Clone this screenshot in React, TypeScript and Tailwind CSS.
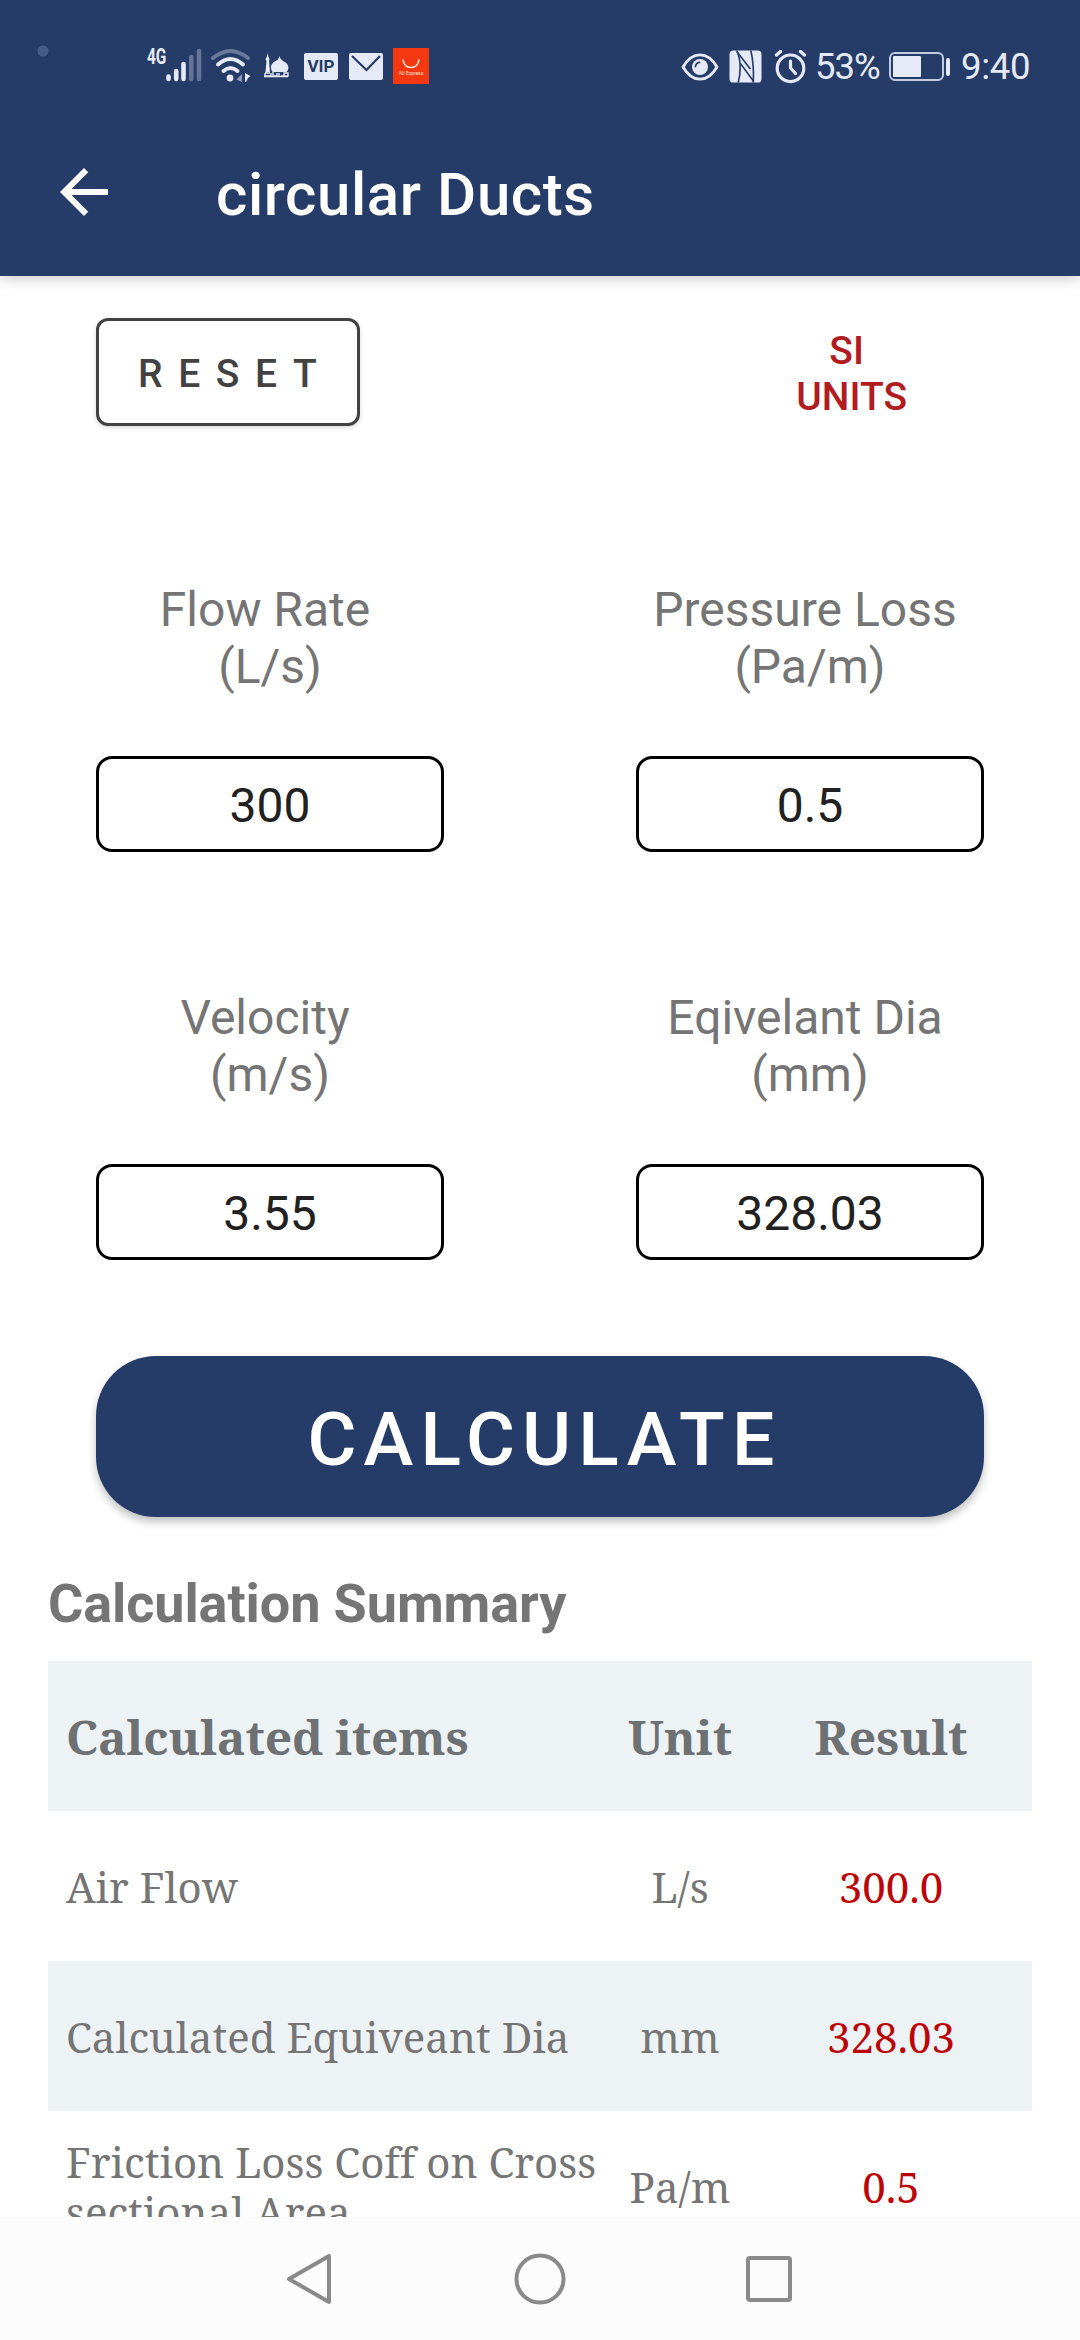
import React from "react";

const SERIF = "font-['Noto_Serif','DejaVu_Serif_Condensed','DejaVu_Serif',serif] [font-variant-ligatures:none]";

function StatusBar() {
  return (
    <div className="flex h-[120px] items-start pt-[45px] text-[#e6eaf7]">
      <svg className="ml-[32px] mt-[-4px] shrink-0" width="20" height="20" viewBox="0 0 20 20">
        <circle cx="11" cy="10" r="5.5" fill="#455a85" />
      </svg>
      <div className="ml-[95px] w-[20px] shrink-0 whitespace-nowrap text-[22px] leading-[24px] font-bold">
        <span className="inline-block origin-left scale-x-[0.7]">4G</span>
      </div>
      <svg className="-ml-[2px] shrink-0" width="38" height="40" viewBox="0 0 38 40">
        <g stroke="#e6eaf7" strokeWidth="4.6" strokeLinecap="round">
          <path d="M3.5 34V31.5M11.2 34V26M18.5 34V19" />
          <path d="M26.3 34V12M34 34V6" opacity=".32" />
        </g>
      </svg>
      <svg className="ml-[8px] shrink-0" width="42" height="40" viewBox="0 0 42 40" fill="none" stroke="#e6eaf7" strokeWidth="4" strokeLinecap="round">
        <path d="M2 13Q19.500 -1 37 13" opacity=".35" />
        <path d="M7 19.500Q19.500 8.500 32 19.500" />
        <path d="M12.500 26Q19.500 20 26.500 26" />
        <circle cx="19" cy="33" r="3.400" fill="#e6eaf7" stroke="none" />
        <path d="M31 29V37L25.500 34.500L28 32Z" fill="#8d9abc" stroke="none" />
        <path d="M34 28L39.500 31L37 33L35 37H34Z" fill="#e6eaf7" stroke="none" />
      </svg>
      <svg className="ml-[10px] shrink-0" width="28" height="40" viewBox="0 0 28 40" fill="#e6eaf7">
        <path d="M4.500 8L5.500 12L6.500 14L6 16L7 27H2.500L3.500 16L2.500 14L3.800 12Z" />
        <path d="M16.500 11Q17.500 15 22 17Q26.500 20 25 25L23.500 27H9.500Q6.500 22 9 19Q11 16.500 15 14.500Z" />
        <g fill="none" stroke="#e6eaf7" strokeWidth="1.400">
          <path d="M2 28V31H8V28M2 28H7M10 27V31H14V28M16 31V28M18 31H25V28H21V31M1 31.500H25" />
        </g>
      </svg>
      <div className="ml-[13px] mt-[8px] flex h-[27px] w-[34px] shrink-0 items-center justify-center rounded-[2px] bg-[#e6eaf7] text-[17px] font-bold text-[#263c68]">
        VIP
      </div>
      <svg className="ml-[11px] mt-[8px] shrink-0" width="34" height="27" viewBox="0 0 34 27">
        <rect width="34" height="27" rx="2" fill="#e6eaf7" />
        <path d="M3 3L17.500 17L31 3" fill="none" stroke="#263c68" strokeWidth="2.200" />
      </svg>
      <div className="ml-[10px] mt-[3px] flex h-[36px] w-[36px] shrink-0 flex-col items-center bg-[#f5380f] pt-[10px]">
        <svg width="18" height="12" viewBox="0 0 18 12" fill="none" stroke="#ffe9df" strokeWidth="1.600">
          <path d="M1 1.500Q2 9.500 9 9.500Q16 9.500 17 1.500" />
        </svg>
        <span className="-mt-[1px] text-[5px] leading-[8px] whitespace-nowrap text-[#ffe0d5]">Ali Express</span>
      </div>
      <div className="flex-1" />
      <svg className="mt-[8px] shrink-0" width="38" height="28" viewBox="0 0 38 28" fill="none" stroke="#e6eaf7">
        <path d="M2 14Q9 1.800 19 1.800Q29 1.800 36 14Q29 26.200 19 26.200Q9 26.200 2 14Z" strokeWidth="2.800" strokeLinejoin="round" />
        <circle cx="19" cy="14" r="8" fill="#e6eaf7" stroke="none" />
        <path d="M14.500 13.500Q15 9.800 18.500 9.300" stroke="#263c68" strokeWidth="1.800" strokeLinecap="round" />
      </svg>
      <svg className="ml-[10px] mt-[5px] shrink-0" width="33" height="34" viewBox="0 0 34 34" fill="none">
        <rect x="0.500" width="33" height="33" rx="4" fill="#e6eaf7" />
        <g stroke="#263c68" strokeWidth="1.700">
          <path d="M8 0Q11.500 8 11.500 17Q11.500 26 9.500 33" />
          <path d="M8 1L22 19" />
          <path d="M11.500 13L25.500 32" />
          <path d="M22.500 0Q26 15 25 33" />
        </g>
      </svg>
      <svg className="ml-[11px] mt-[5px] shrink-0" width="36" height="34" viewBox="0 0 36 34" fill="none" stroke="#e6eaf7" strokeLinecap="round">
        <circle cx="17.500" cy="18.300" r="13.300" strokeWidth="3.200" />
        <path d="M17.500 11V18L22.500 23.500" strokeWidth="3.200" />
        <path d="M3.500 5L7.500 1.500M27.500 1.500L31.500 5" strokeWidth="3.400" />
      </svg>
      <span className="ml-[6px] mt-[1px] w-[67px] shrink-0 whitespace-nowrap text-[36.500px] leading-[42px] tracking-[-1px]">53%</span>
      <div className="ml-[7px] mt-[7px] h-[29px] w-[55px] shrink-0 rounded-[6px] border-2 border-[#c0cbe4] p-[2px]">
        <div className="h-[21px] w-[28px] rounded-[1px] bg-[#e6eaf7]" />
      </div>
      <div className="ml-[2px] mt-[13px] h-[18px] w-[4px] shrink-0 rounded-[2px] bg-[#e6eaf7]" />
      <span className="ml-[11px] mr-[50px] mt-[1px] w-[69px] shrink-0 whitespace-nowrap text-[36.500px] leading-[42px] tracking-[-0.300px]">9:40</span>
    </div>
  );
}

function Field({ label, unit, value }: { label: string; unit: string; value: string }) {
  return (
    <div className="w-[348px]">
      <div className="text-center text-[48px] leading-[57px] text-[#757575]">
        <div className="-ml-[10px] whitespace-nowrap">{label}</div>
        <div className="whitespace-nowrap">{unit}</div>
      </div>
      <div className="mt-[61px] flex h-[96px] items-center justify-center rounded-[16px] border-3 border-black pt-[3px] text-[48px] text-[#212121]">
        {value}
      </div>
    </div>
  );
}

const ROWS = [
  { item: "Air Flow", unit: "L/s", result: "300.0" },
  { item: "Calculated Equiveant Dia", unit: "mm", result: "328.03" },
  { item: "Friction Loss Coff on Cross sectional Area", unit: "Pa/m", result: "0.5" },
];

export default function App() {
  return (
    <div className="flex h-[2340px] w-[1080px] flex-col overflow-hidden bg-white font-[Roboto,sans-serif]">
      <header className="z-10 h-[276px] shrink-0 bg-[#263c68] shadow-[0_4px_12px_rgba(0,0,0,0.18)]">
        <StatusBar />
        <div className="flex h-[144px] items-center">
          <svg className="ml-[48px]" width="72" height="72" viewBox="0 0 24 24" fill="#fff">
            <path d="M20 11H7.830l5.590-5.590L12 4l-8 8 8 8 1.410-1.410L7.830 13H20v-2z" />
          </svg>
          <h1 className="ml-[96px] pt-[5px] text-[60px] leading-[70px] font-medium tracking-[0.600px] text-white">circular Ducts</h1>
        </div>
      </header>

      <main className="min-h-0 flex-1 overflow-hidden">
        <div className="flex justify-between pt-[42px] pl-[96px]">
          <button className="flex h-[108px] w-[264px] items-center rounded-[12px] border-3 border-[#424242] bg-white pt-[4px] pl-[39px] text-[39px] font-medium tracking-[15.600px] text-[#424242] shadow-[0_2px_5px_rgba(0,0,0,0.15)]">
            RESET
          </button>
          <button className="mt-[4px] mr-[173px] text-center text-[39px] leading-[46px] font-medium text-[#b01c1f]">
            <span className="-ml-[10px] block">SI</span>
            UNITS
          </button>
        </div>

        <div className="flex justify-between px-[96px] pt-[155px]">
          <Field label="Flow Rate" unit="(L/s)" value="300" />
          <Field label="Pressure Loss" unit="(Pa/m)" value="0.5" />
        </div>
        <div className="flex justify-between px-[96px] pt-[137px]">
          <Field label="Velocity" unit="(m/s)" value="3.55" />
          <Field label="Eqivelant Dia" unit="(mm)" value="328.03" />
        </div>

        <button className="mt-[96px] ml-[96px] flex h-[161px] w-[888px] items-center justify-center rounded-[60px] bg-[#263c68] pt-[6px] pl-[9px] text-[75px] font-medium tracking-[7.200px] text-white shadow-[0_5px_8px_rgba(0,0,0,0.25)]">
          CALCULATE
        </button>

        <h2 className="mt-[55px] ml-[48px] text-[54px] leading-[64px] font-bold tracking-[-0.100px] text-[#757575]">Calculation Summary</h2>

        <div className={"mx-[48px] mt-[25px] " + SERIF}>
          <div className="grid h-[150px] grid-cols-[562px_140px_282px] items-center bg-[#edf2f5] text-center text-[48px] leading-[57px] font-bold text-[#6d7173]">
            <span className="pl-[18px] text-left tracking-[-0.200px]">Calculated items</span>
            <span>Unit</span>
            <span>Result</span>
          </div>
          {ROWS.map((r) => (
            <div key={r.item} className="grid h-[150px] grid-cols-[562px_140px_282px] items-center pt-[1px] text-center text-[42px] leading-[50px] text-[#757575] even:bg-white odd:bg-[#edf2f5]">
              <span className="pl-[18px] text-left">{r.item}</span>
              <span>{r.unit}</span>
              <span className="text-[#bb0509]">{r.result}</span>
            </div>
          ))}
        </div>
      </main>

      <nav className="flex h-[123px] shrink-0 items-center bg-[#fcfcfc]">
        <svg className="ml-[284px]" width="50" height="56" viewBox="0 0 50 56" fill="none" stroke="#8a8a8a" strokeWidth="4" strokeLinejoin="round">
          <path d="M45 5V51L5 28Z" />
        </svg>
        <svg className="ml-[178px]" width="56" height="56" viewBox="0 0 56 56" fill="none" stroke="#8a8a8a" strokeWidth="4">
          <circle cx="28" cy="28" r="23.500" />
        </svg>
        <svg className="ml-[173px]" width="56" height="56" viewBox="0 0 56 56" fill="none" stroke="#8a8a8a" strokeWidth="4">
          <rect x="7" y="7" width="42" height="42" rx="2" />
        </svg>
      </nav>
    </div>
  );
}
